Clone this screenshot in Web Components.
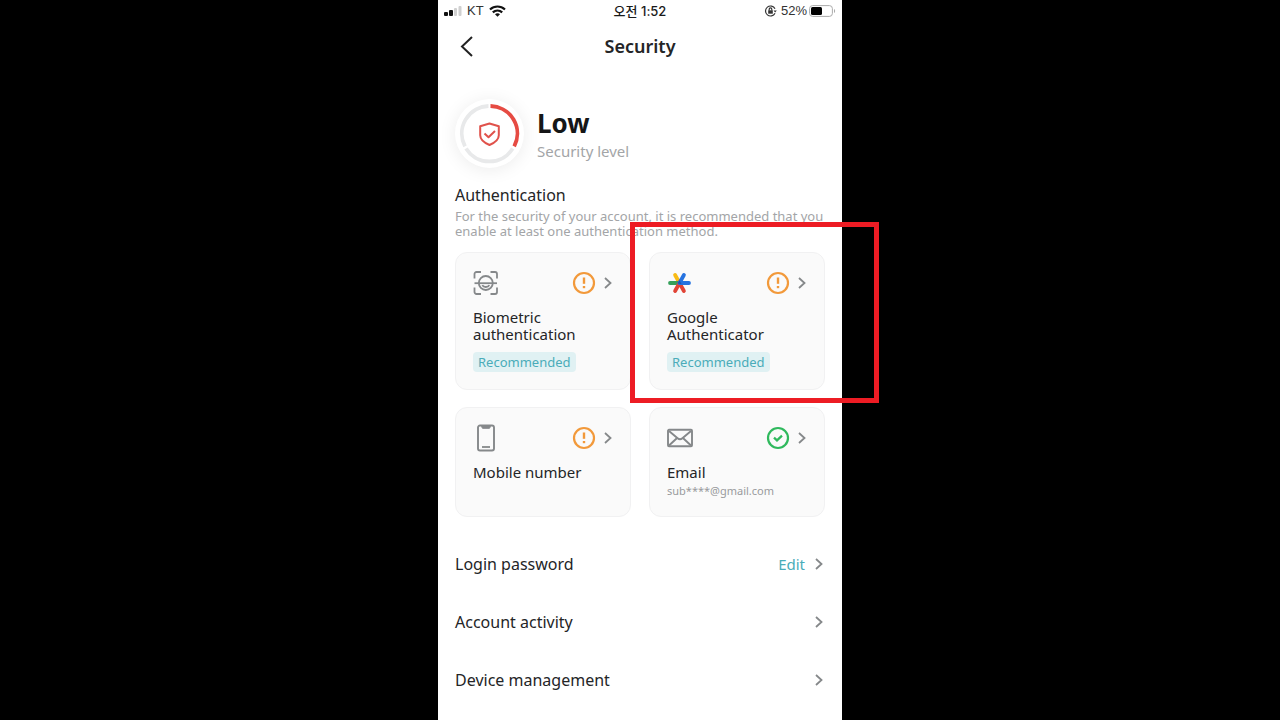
<!DOCTYPE html>
<html lang="en">
<head>
<meta charset="utf-8">
<meta name="viewport" content="width=device-width, initial-scale=1">
<title>Security</title>
<style>
  body {
    margin: 0;
    background: #000;
    color: #242527;
    font-family: "Noto Sans", "Noto Sans CJK KR", sans-serif;
    --accent: #4aacb9;
    --muted: #a3a5a7;
  }
</style>
</head>
<body>
<security-page></security-page>

<script>
const ICONS = {
  chevron: `<svg width="8" height="14" viewBox="0 0 8 14" fill="none" stroke="#85888a" stroke-width="1.8"><path d="M1 2l5.5 5L1 12"/></svg>`,
  alert: `<svg width="24" height="24" viewBox="0 0 24 24" fill="none" stroke="#f2993a" stroke-width="2.2"><circle cx="12" cy="12" r="10"/><path d="M12 6.5v6.3" stroke-width="2.4"/><path d="M12 15v2.2" stroke-width="2.4"/></svg>`,
  ok: `<svg width="24" height="24" viewBox="0 0 24 24" fill="none" stroke="#2fb95d" stroke-width="2.2"><circle cx="12" cy="12" r="10"/><path d="m8 11.6 3 2.8 5-4.8"/></svg>`,
  face: `<svg width="26" height="26" viewBox="0 0 26 26" fill="none" stroke="#85888a" stroke-width="1.8"><path d="M1.5 8.5V4a2 2 0 0 1 2-2H8M17.5 2H22a2 2 0 0 1 2 2v4.500M24 17.5V22a2 2 0 0 1-2 2h-4.500M8 24H3.500a2 2 0 0 1-2-2v-4.500"/><circle cx="12.8" cy="13" r="7"/><path d="M1.500 13.200H24"/><path d="M9.300 15.200c1.200 2.400 5.800 2.400 7 0"/></svg>`,
  phone: `<svg width="26" height="28" viewBox="0 0 26 28" fill="none" stroke="#85888a" stroke-width="1.9"><rect x="5" y="1.5" width="16" height="25" rx="2"/><path d="M8.5 2.5h9l-1 1.8h-7z" fill="#85888a" stroke-width="1"/><path d="M9 23h8" stroke-width="1.8"/></svg>`,
  mail: `<svg width="26" height="20" viewBox="0 0 26 20" fill="none" stroke="#85888a" stroke-width="1.9"><rect x="1" y="1.8" width="24" height="16.5" rx="1"/><path d="m2 3 8.6 7.3a3.7 3.7 0 0 0 4.8 0L24 3M2 17.5l7.8-7.3M24 17.5l-7.8-7.3"/></svg>`,
  google: `<svg width="26" height="26" viewBox="0 0 26 26" fill="none" stroke-width="3.8" stroke-linecap="round"><path d="M12.500 13 8.100 5" stroke="#f8bb15"/><path d="M12.500 13H3" stroke="#34a05a"/><path d="m8.100 21 4.400-8 4.400 8" stroke="#e14436"/><path d="M12.500 13H22M12.500 13l4.400-8" stroke="#2673e0"/><path d="m10.600 13.600 1.900-3.400 2 3.800z" fill="#1d55b5"/></svg>`
};

class StatusBar extends HTMLElement {
  constructor() {
    super();
    this.attachShadow({ mode: 'open' });
  }

  connectedCallback() {
    this.shadowRoot.innerHTML = `
      <style>
        :host {
          display: grid;
          grid-template-columns: 1fr auto 1fr;
          align-items: center;
          height: 22px;
          padding: 0 6px;
          font-family: "Liberation Sans", "Noto Sans CJK KR", sans-serif;
          font-size: 13px;
          line-height: 16px;
          color: #333;
        }
        .side {
          display: flex;
          align-items: center;
          gap: 5px;
        }
        .right {
          justify-content: flex-end;
          gap: 4px;
        }
        .battery {
          display: flex;
          align-items: center;
          gap: 2px;
        }
        .time {
          font-family: Inter, "Noto Sans CJK KR", sans-serif;
          font-weight: 500;
          color: #1a1a1a;
        }
        svg {
          display: block;
        }
      </style>
      <div class="side">
        <svg width="18" height="12" viewBox="0 0 18 12"><g fill="#111"><rect y="7" width="4" height="4" rx="1"/><rect x="5" y="5" width="4" height="6" rx="1"/></g><g fill="#d0d0d0"><rect x="10" y="3" width="3" height="8" rx="1"/><rect x="14.5" y="1" width="3" height="10" rx="1"/></g></svg>
        <span>KT</span>
        <svg width="17" height="12" viewBox="0 0 17 12" fill="none" stroke="#111" stroke-width="2.2"><path d="M1 4.5c4.3-4 10.7-4 15 0M3.8 7.4c2.7-2.5 6.7-2.5 9.4 0"/><path d="M8.5 11.7 6 9.3c1.5-1.3 3.5-1.3 5 0z" fill="#111" stroke="none"/></svg>
      </div>
      <div class="time">오전 1:52</div>
      <div class="side right">
        <svg width="13" height="12" viewBox="0 0 13 12" fill="none" stroke="#333" stroke-width="1.2"><path d="M11 3.8A5 5 0 1 0 11 8.2"/><path d="m9.5 5.5 1.7 2 1.6-2z" fill="#333" stroke="none"/><rect x="4.2" y="5.3" width="4.6" height="3.4" fill="#333" stroke="none"/><path d="M5.2 5.5V4.3c0-1.8 2.6-1.8 2.6 0v1.2"/></svg>
        <div class="battery">
          <span>52%</span>
          <svg width="27" height="12" viewBox="0 0 27 12"><rect x=".6" y=".6" width="22.8" height="10.8" rx="3" fill="none" stroke="#aaa"/><rect x="2" y="2" width="11" height="8" rx="1.5" fill="#000"/><path d="M25 4v4c1.5-.8 1.5-3.2 0-4z" fill="#aaa"/></svg>
        </div>
      </div>
    `;
  }
}

class PageHeader extends HTMLElement {
  constructor() {
    super();
    this.attachShadow({ mode: 'open' });
  }

  connectedCallback() {
    this.shadowRoot.innerHTML = `
      <style>
        :host {
          display: grid;
          grid-template-columns: 1fr auto 1fr;
          align-items: center;
          height: 47px;
          padding: 0 17px;
        }
        button {
          display: flex;
          justify-self: start;
          padding: 4px;
          border: none;
          background: none;
          cursor: pointer;
        }
        h1 {
          margin: 0;
          font-size: 18px;
          line-height: 24px;
          font-weight: 600;
        }
      </style>
      <button aria-label="Back">
        <svg width="16" height="22" viewBox="0 0 16 22" fill="none" stroke="#222" stroke-width="2"><path d="m13 2-10 9.5L13 21"/></svg>
      </button>
      <h1><slot></slot></h1>
    `;
  }
}

class SecurityLevel extends HTMLElement {
  constructor() {
    super();
    this.attachShadow({ mode: 'open' });
  }

  connectedCallback() {
    this.shadowRoot.innerHTML = `
      <style>
        :host {
          display: flex;
          align-items: center;
          gap: 13px;
        }
        .ring {
          width: 69px;
          height: 69px;
          border-radius: 50%;
          background: #fff;
          box-shadow: 0 2px 18px rgba(0,0,0,0.08);
        }
        .value {
          font-size: 26px;
          line-height: 34px;
          font-weight: 700;
          color: #151617;
        }
        .label {
          font-size: 15px;
          line-height: 22px;
          color: var(--muted);
        }
      </style>
      <div class="ring">
        <svg width="69" height="69" viewBox="0 0 69 69" fill="none">
          <g stroke-width="3.8">
            <path d="M35.5 7A27.5 27.5 0 0 1 59.2 47.3" stroke="#e64b43"/>
            <path d="M57.7 49.5A27.5 27.5 0 0 1 11 49.5M10 47.3A27.5 27.5 0 0 1 33.5 7" stroke="#e8e9ea"/>
          </g>
          <g stroke="#e0524b" stroke-width="2" stroke-linejoin="round">
            <path d="m34.5 24.5 9.3 2.8v9c0 4.5-4 7.5-9.3 9.7-5.3-2.2-9.3-5.2-9.3-9.7v-9z"/>
            <path d="m29.5 34.5 4 3.8 6.5-6.3"/>
          </g>
        </svg>
      </div>
      <div>
        <div class="value"><slot></slot></div>
        <div class="label">Security level</div>
      </div>
    `;
  }
}

class AuthCard extends HTMLElement {
  constructor() {
    super();
    this.attachShadow({ mode: 'open' });
  }

  connectedCallback() {
    const icon = this.getAttribute('icon');
    const status = this.getAttribute('status');
    this.shadowRoot.innerHTML = `
      <style>
        :host {
          display: block;
          position: relative;
        }
        a {
          display: block;
          box-sizing: border-box;
          height: 100%;
          padding: 17px;
          border: 1px solid #f1f1f2;
          border-radius: 12px;
          background: #fafafa;
          color: inherit;
          text-decoration: none;
        }
        .top {
          display: flex;
          align-items: center;
          height: 26px;
          margin-bottom: 13px;
        }
        .status {
          display: flex;
          align-items: center;
          gap: 8px;
          margin-left: auto;
          padding-right: 1px;
        }
        .title {
          font-size: 15px;
          line-height: 17px;
        }
        svg {
          display: block;
        }
        ::slotted([slot="badge"]) {
          display: table;
          margin-top: 9px;
          padding: 0 5px;
          border-radius: 4px;
          background: #e0f1f3;
          color: var(--accent);
          font-size: 13px;
          line-height: 20px;
        }
        ::slotted([slot="note"]) {
          display: block;
          margin-top: 2px;
          color: #999b9d;
          font-size: 11px;
          line-height: 16px;
        }
        /* red frame that marks the card, drawn over its neighbours */
        :host([marked])::after {
          content: "";
          position: absolute;
          z-index: 1;
          inset: -30px -54px -13px -19px;
          border: 5px solid #ed1c24;
          pointer-events: none;
        }
      </style>
      <a href="#${icon}">
        <div class="top">
          ${ICONS[icon]}
          <div class="status">${ICONS[status]}${ICONS.chevron}</div>
        </div>
        <div class="title"><slot></slot></div>
        <slot name="badge"></slot>
        <slot name="note"></slot>
      </a>
    `;
  }
}

class SettingRow extends HTMLElement {
  constructor() {
    super();
    this.attachShadow({ mode: 'open' });
  }

  connectedCallback() {
    this.shadowRoot.innerHTML = `
      <style>
        :host {
          display: block;
        }
        a {
          display: flex;
          align-items: center;
          gap: 10px;
          height: 58px;
          padding-right: 2px;
          font-size: 16px;
          line-height: 22px;
          color: inherit;
          text-decoration: none;
        }
        .label {
          flex: 1;
        }
        ::slotted([slot="action"]) {
          color: var(--accent);
          font-size: 15px;
        }
      </style>
      <a href="#">
        <span class="label"><slot></slot></span>
        <slot name="action"></slot>
        ${ICONS.chevron}
      </a>
    `;
  }
}

class SecurityPage extends HTMLElement {
  constructor() {
    super();
    this.attachShadow({ mode: 'open' });
  }

  connectedCallback() {
    this.shadowRoot.innerHTML = `
      <style>
        :host {
          display: block;
          max-width: 404px;
          min-height: 100vh;
          margin: 0 auto;
          background: #fff;
        }
        main {
          padding: 30px 17px 0;
        }
        h2 {
          margin: 17px 0 4px;
          font-size: 16px;
          line-height: 20px;
          font-weight: 400;
        }
        p {
          margin: 0 0 13px;
          font-size: 13px;
          line-height: 15px;
          color: var(--muted);
        }
        .cards {
          display: grid;
          grid-template-columns: 1fr 1fr;
          gap: 17px 18px;
          margin-bottom: 18px;
        }
      </style>
      <status-bar></status-bar>
      <page-header>Security</page-header>
      <main>
        <security-level>Low</security-level>
        <h2>Authentication</h2>
        <p>For the security of your account, it is recommended that you enable at least one authentication method.</p>
        <div class="cards">
          <auth-card icon="face" status="alert">Biometric authentication<span slot="badge">Recommended</span></auth-card>
          <auth-card icon="google" status="alert" marked>Google Authenticator<span slot="badge">Recommended</span></auth-card>
          <auth-card icon="phone" status="alert">Mobile number</auth-card>
          <auth-card icon="mail" status="ok">Email<span slot="note">sub****@gmail.com</span></auth-card>
        </div>
        <setting-row>Login password<span slot="action">Edit</span></setting-row>
        <setting-row>Account activity</setting-row>
        <setting-row>Device management</setting-row>
      </main>
    `;
  }
}

customElements.define('status-bar', StatusBar);
customElements.define('page-header', PageHeader);
customElements.define('security-level', SecurityLevel);
customElements.define('auth-card', AuthCard);
customElements.define('setting-row', SettingRow);
customElements.define('security-page', SecurityPage);
</script>
</body>
</html>
